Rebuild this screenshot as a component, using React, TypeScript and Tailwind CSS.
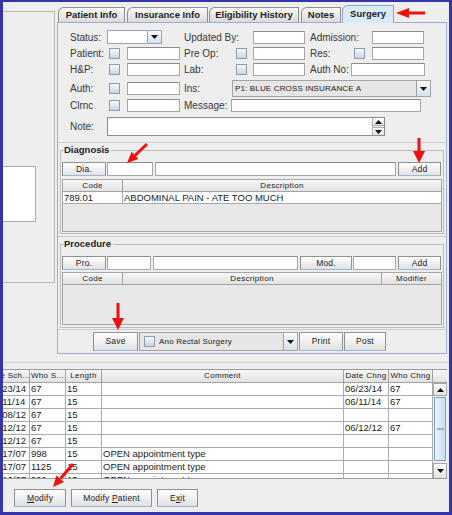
import React from 'react';

const Tri: React.FC<{ up?: boolean }> = ({ up }) => (
  <svg width="7" height="4" viewBox="0 0 7 4">
    {up ? <polygon points="0,4 7,4 3.5,0" fill="#111" /> : <polygon points="0,0 7,0 3.5,4" fill="#111" />}
  </svg>
);

const Input: React.FC<{ className?: string }> = ({ className = '' }) => (
  <div className={`h-[13px] shrink-0 bg-white border border-[#a6a6a6] border-t-[#8c8c8c] ${className}`} />
);

const Check: React.FC<{ className?: string }> = ({ className = '' }) => (
  <div className={`w-[11px] h-[11px] shrink-0 border border-[#8d9cb2] bg-gradient-to-b from-[#f8fafc] to-[#cad5e1] ${className}`} />
);

const Btn: React.FC<{ className?: string; children: React.ReactNode }> = ({ className = '', children }) => (
  <div
    className={`shrink-0 flex items-center justify-center border border-[#909090] border-b-[#9ab6da] bg-gradient-to-b from-white to-[#e1e1e1] text-[8.5px] tracking-[0.2px] text-[#222] ${className}`}
  >
    {children}
  </div>
);

const DropBtn: React.FC<{ className?: string }> = ({ className = '' }) => (
  <div
    className={`w-[14px] shrink-0 flex items-center justify-center border-l border-[#a0a0a0] bg-gradient-to-b from-[#fbfbfb] to-[#d6e1ec] ${className}`}
  >
    <Tri />
  </div>
);

const Tab: React.FC<{ label: string; className: string; active?: boolean }> = ({ label, className, active }) => (
  <div
    className={`${className} ${
      active
        ? 'relative z-10 h-[18px] -mb-[1px] bg-[#d9ecfa] border-[#8fa3cc]'
        : 'h-[15px] bg-gradient-to-b from-[#fafafa] to-[#dadada] border-[#8e8e8e]'
    } shrink-0 border border-b-0 rounded-tl-[6px] flex items-center justify-center text-[9.5px] font-bold text-[#1e1e1e]`}
  >
    {label}
  </div>
);

// bottom table, the first column is scrolled partly out of view
const cols = ['w-[42px]', 'w-[36px]', 'w-[36px]', 'w-[242px]', 'w-[45px]', 'w-[44px]'];
const heads = ['Date Sch...', 'Who S...', 'Length', 'Comment', 'Date Chng', 'Who Chng'];
const rows = [
  ['06/23/14', '67', '15', '', '06/23/14', '67'],
  ['06/11/14', '67', '15', '', '06/11/14', '67'],
  ['06/08/12', '67', '15', '', '', ''],
  ['06/12/12', '67', '15', '', '06/12/12', '67'],
  ['06/12/12', '67', '15', '', '', ''],
  ['04/17/07', '998', '15', 'OPEN appointment type', '', ''],
  ['04/17/07', '1125', '15', 'OPEN appointment type', '', ''],
  ['04/16/07', '999', '15', 'OPEN appointment type', '', ''],
];

const HeadCell: React.FC<{ className: string; children?: React.ReactNode }> = ({ className, children }) => (
  <div
    className={`${className} shrink-0 h-full flex items-center justify-center overflow-hidden whitespace-nowrap border-r border-b border-[#a2a2a2] bg-gradient-to-b from-[#f7f7f7] to-[#e2e2e2] text-[8px] tracking-[0.3px] text-[#222]`}
  >
    {children}
  </div>
);

export default function App() {
  return (
    <div className="relative w-[452px] h-[515px] bg-[#3535a9] pt-[2px] px-[3px] pb-[3px] [font-family:'Liberation_Sans',Arial,sans-serif] text-[#333]">
      <div className="w-[446px] h-[510px] bg-[#eeeeee] flex flex-col">
        <div className="flex h-[352px] shrink-0">
          {/* Left panel */}
          <div className="w-[54px] pt-[9px] shrink-0">
            <div className="w-[52px] h-[272px] border-t border-r border-b border-[#b8b8b8] pt-[154px]">
              <div className="w-[33px] h-[56px] bg-white border-t border-r border-b border-[#a9a9a9]" />
            </div>
          </div>

          {/* Tabs */}
          <div className="w-[390px] flex flex-col shrink-0">
            <div className="h-[20px] flex items-end pl-[1px] shrink-0">
              <Tab label="Patient Info" className="w-[67px]" />
              <Tab label="Insurance Info" className="w-[81px] ml-[2px]" />
              <Tab label="Eligibility History" className="w-[90px] ml-[1px]" />
              <Tab label="Notes" className="w-[40px] ml-[2px]" />
              <Tab label="Surgery" className="w-[52px] ml-[1px]" active />
            </div>

            <div className="h-[332px] border border-[#9eabdb] flex flex-col">
              {/* Form */}
              <div className="h-[120px] shrink-0 border-b border-[#cdcdcd] pl-[12px] text-[10px] text-[#383838]">
                <div className="flex items-center h-[14px] mt-[7px]">
                  <span className="w-[37px] shrink-0">Status:</span>
                  <div className="w-[55px] h-[14px] flex bg-white border border-[#8ea4c2] shrink-0">
                    <div className="flex-1" />
                    <DropBtn />
                  </div>
                  <span className="ml-[22px] w-[69px] shrink-0">Updated By:</span>
                  <Input className="w-[52px]" />
                  <span className="ml-[5px] w-[62px] shrink-0">Admission:</span>
                  <Input className="w-[52px]" />
                </div>

                <div className="flex items-center h-[13px] mt-[3px]">
                  <span className="w-[39px] shrink-0">Patient:</span>
                  <Check />
                  <Input className="ml-[7px] w-[53px]" />
                  <span className="ml-[4px] w-[52px] shrink-0">Pre Op:</span>
                  <Check />
                  <Input className="ml-[6px] w-[52px]" />
                  <span className="ml-[5px] w-[44px] shrink-0">Res:</span>
                  <Check />
                  <Input className="ml-[7px] w-[52px]" />
                </div>

                <div className="flex items-center h-[13px] mt-[3px]">
                  <span className="w-[39px] shrink-0">H&amp;P:</span>
                  <Check />
                  <Input className="ml-[7px] w-[53px]" />
                  <span className="ml-[4px] w-[52px] shrink-0">Lab:</span>
                  <Check />
                  <Input className="ml-[6px] w-[52px]" />
                  <span className="ml-[5px] w-[41px] shrink-0">Auth No:</span>
                  <Input className="w-[74px]" />
                </div>

                <div className="flex items-center h-[17px] mt-[4px]">
                  <span className="w-[39px] shrink-0">Auth:</span>
                  <Check />
                  <Input className="ml-[7px] w-[53px]" />
                  <span className="ml-[4px] w-[48px] shrink-0">Ins:</span>
                  <div className="w-[199px] h-[17px] flex border border-[#a3a3a3] bg-[#e6e6e6] shrink-0">
                    <div className="flex-1 flex items-center pl-[2px] text-[8px] tracking-[0.15px] text-[#222]">
                      P1: BLUE CROSS INSURANCE A
                    </div>
                    <DropBtn />
                  </div>
                </div>

                <div className="flex items-center h-[13px] mt-[2px]">
                  <span className="w-[39px] shrink-0">Clrnc</span>
                  <Check />
                  <Input className="ml-[7px] w-[53px]" />
                  <span className="ml-[4px] w-[47px] shrink-0">Message:</span>
                  <Input className="w-[190px]" />
                </div>

                <div className="flex items-center h-[19px] mt-[5px]">
                  <span className="w-[37px] shrink-0">Note:</span>
                  <div className="w-[278px] h-[19px] flex bg-white border border-[#8c8c8c] shrink-0">
                    <div className="flex-1" />
                    <div className="w-[12px] flex flex-col justify-between border-l border-[#b0b0b0] bg-[#f0f0f0]">
                      <div className="h-[8px] flex items-center justify-center border-b border-[#b0b0b0] bg-gradient-to-b from-white to-[#e0e0e0]">
                        <Tri up />
                      </div>
                      <div className="h-[8px] flex items-center justify-center border-t border-[#b0b0b0] bg-gradient-to-b from-white to-[#e0e0e0]">
                        <Tri />
                      </div>
                    </div>
                  </div>
                </div>
              </div>

              {/* Diagnosis */}
              <div className="h-[94px] shrink-0 border-b border-[#cdcdcd] px-[2px] pt-[7px]">
                <div className="relative h-[84px] border border-[#bdbdbd] px-[1px] pt-[11px]">
                  <span className="absolute top-[-7px] left-[3px] bg-[#eeeeee] pr-[2px] text-[9.5px] font-bold leading-[12px] text-[#222]">
                    Diagnosis
                  </span>
                  <div className="flex h-[14px]">
                    <Btn className="w-[44px]">Dia.</Btn>
                    <Input className="ml-[1px] w-[46px] h-[14px]" />
                    <Input className="ml-[2px] w-[241px] h-[14px]" />
                    <Btn className="ml-[2px] w-[43px]">Add</Btn>
                  </div>
                  <div className="mt-[3px] h-[53px] border border-[#a8a8a8] bg-[#e8e8e8] flex flex-col">
                    <div className="h-[12px] flex shrink-0">
                      <HeadCell className="w-[60px]">Code</HeadCell>
                      <HeadCell className="flex-1 border-r-0">Description</HeadCell>
                    </div>
                    <div className="h-[12px] flex bg-white border-b border-[#a8a8a8] text-[9.5px] leading-[11px] text-[#222] shrink-0">
                      <div className="w-[60px] border-r border-[#a8a8a8] pl-[1px]">789.01</div>
                      <div className="flex-1 pl-[1px] whitespace-nowrap">ABDOMINAL PAIN - ATE TOO MUCH</div>
                    </div>
                  </div>
                </div>
              </div>

              {/* Procedure */}
              <div className="h-[93px] shrink-0 border-b border-[#cdcdcd] px-[2px] pt-[7px]">
                <div className="relative h-[84px] border border-[#bdbdbd] px-[1px] pt-[11px]">
                  <span className="absolute top-[-7px] left-[3px] bg-[#eeeeee] pr-[2px] text-[9.5px] font-bold leading-[12px] text-[#222]">
                    Procedure
                  </span>
                  <div className="flex h-[14px]">
                    <Btn className="w-[44px]">Pro.</Btn>
                    <Input className="ml-[1px] w-[44px] h-[14px]" />
                    <Input className="ml-[2px] w-[145px] h-[14px]" />
                    <Btn className="ml-[2px] w-[52px]">Mod.</Btn>
                    <Input className="ml-[1px] w-[43px] h-[14px]" />
                    <Btn className="ml-[2px] w-[43px]">Add</Btn>
                  </div>
                  <div className="mt-[2px] h-[53px] border border-[#a8a8a8] bg-[#e8e8e8] flex flex-col">
                    <div className="h-[12px] flex shrink-0">
                      <HeadCell className="w-[60px]">Code</HeadCell>
                      <HeadCell className="w-[259px]">Description</HeadCell>
                      <HeadCell className="flex-1 border-r-0">Modifier</HeadCell>
                    </div>
                  </div>
                </div>
              </div>

              {/* Save row */}
              <div className="flex h-[19px] mt-[2px] pl-[35px] shrink-0">
                <Btn className="w-[45px]">Save</Btn>
                <div className="ml-[1px] w-[159px] flex border border-[#a3a3a3] bg-[#e6e6e6] shrink-0">
                  <div className="flex-1 flex items-center pl-[4px]">
                    <Check />
                    <span className="ml-[4px] text-[8px] tracking-[0.2px] text-[#222]">Ano Rectal Surgery</span>
                  </div>
                  <DropBtn />
                </div>
                <Btn className="ml-[1px] w-[44px]">Print</Btn>
                <Btn className="ml-[1px] w-[42px]">Post</Btn>
              </div>
            </div>
          </div>
        </div>

        <div className="h-[9px] shrink-0 border-b border-[#d2d2d2]" />

        {/* Appointment table */}
        <div className="mt-[6px] h-[110px] w-[444px] shrink-0 overflow-hidden border-t border-b border-[#9a9a9a] bg-white">
          <div className="ml-[-15px] w-[459px] flex flex-col">
            <div className="h-[13px] flex">
              {heads.map((h, i) => (
                <HeadCell key={h} className={cols[i]}>
                  {h}
                </HeadCell>
              ))}
              <HeadCell className="w-[14px] border-r-0" />
            </div>
            <div className="h-[96px] flex">
              <div className="w-[445px] flex flex-col shrink-0">
                {rows.map((r, ri) => (
                  <div key={ri} className="h-[13px] flex shrink-0">
                    {r.map((c, ci) => (
                      <div
                        key={ci}
                        className={`${cols[ci]} shrink-0 h-full border-r border-b border-[#ababab] px-[1px] overflow-hidden whitespace-nowrap text-[9.5px] leading-[12px] text-[#222]`}
                      >
                        {c}
                      </div>
                    ))}
                  </div>
                ))}
              </div>
              <div className="w-[14px] shrink-0 flex flex-col bg-[#eeeeee]">
                <div className="h-[13px] flex items-center justify-center border border-[#a8a8a8] bg-gradient-to-b from-white to-[#e2e2e2]">
                  <Tri up />
                </div>
                <div className="flex-1 px-[1px] pt-[1px]">
                  <div className="h-[64px] border border-[#7ea2cf] bg-gradient-to-r from-[#eef4fb] to-[#c9dbf1] flex items-center justify-center">
                    <div className="w-[7px] h-[2px] bg-[#8fb2dc]" />
                  </div>
                </div>
                <div className="h-[16px] flex items-center justify-center border border-[#a8a8a8] bg-gradient-to-b from-white to-[#e2e2e2]">
                  <Tri />
                </div>
              </div>
            </div>
          </div>
        </div>

        {/* Bottom buttons */}
        <div className="flex h-[18px] mt-[10px] pl-[11px] shrink-0">
          <Btn className="w-[52px] text-[8.5px]">
            <span>
              <span className="underline">M</span>odify
            </span>
          </Btn>
          <Btn className="ml-[5px] w-[81px]">
            <span>
              Modify <span className="underline">P</span>atient
            </span>
          </Btn>
          <Btn className="ml-[5px] w-[41px]">
            <span>
              E<span className="underline">x</span>it
            </span>
          </Btn>
        </div>
      </div>

      {/* Red annotation arrows */}
      <svg className="absolute left-0 top-0 pointer-events-none" width="452" height="515" viewBox="0 0 452 515">
        <g fill="#ee1111" stroke="#ee1111">
          <line x1="407" y1="13" x2="425" y2="13" strokeWidth="3" />
          <polygon points="396,13 409,8 409,18" stroke="none" />

          <line x1="147" y1="144" x2="135" y2="155.5" strokeWidth="3" />
          <polygon points="127,163 138.4,159 131.6,151.8" stroke="none" />

          <line x1="419" y1="138" x2="419" y2="152" strokeWidth="3" />
          <polygon points="413,151 425,151 419,163" stroke="none" />

          <line x1="118" y1="303" x2="118" y2="319" strokeWidth="3" />
          <polygon points="112,318 124,318 118,330" stroke="none" />

          <line x1="73" y1="464" x2="60.5" y2="478.5" strokeWidth="3" />
          <polygon points="53,487 64,482 56.4,475.4" stroke="none" />
        </g>
      </svg>
    </div>
  );
}
